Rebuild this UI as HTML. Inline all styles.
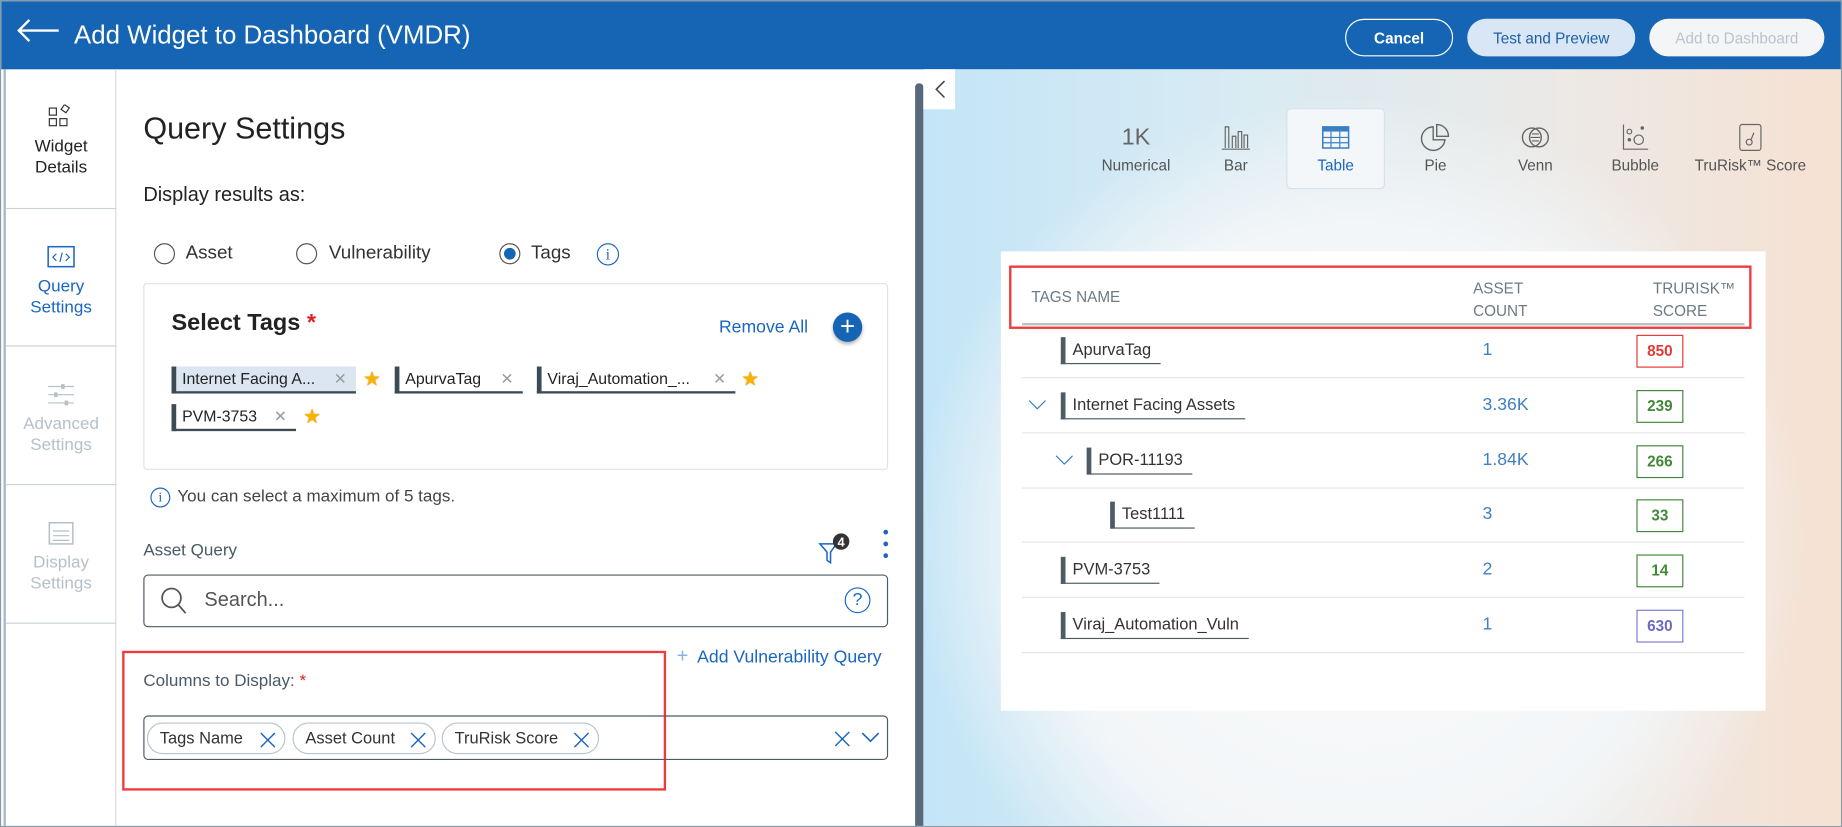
<!DOCTYPE html>
<html><head><meta charset="utf-8">
<style>
*{box-sizing:border-box;margin:0;padding:0}
html,body{width:1842px;height:827px;overflow:hidden;background:#fff}
#w{position:absolute;left:0;top:0;width:1568px;height:704px;transform:scale(1.17474);transform-origin:0 0;font-family:"Liberation Sans",sans-serif;color:#222;overflow:hidden;border:1px solid #8a9aa6}
.a{position:absolute}
.hd{left:0;top:0;width:1568px;height:58px;background:#1565b4}
.btn{position:absolute;top:15px;height:32px;border-radius:16px;font-size:13px;display:flex;align-items:center;justify-content:center}
.nav{left:2px;top:58px;width:96px;height:646px;border-right:1px solid #d5dde3;border-left:2px solid #a8b8c2}
.ni{position:absolute;left:0;width:94px;border-bottom:1px solid #c8d3da;text-align:center;font-size:14.5px;line-height:18px}
.chip{position:absolute;height:23px;border-left:4px solid #3d4b55;border-bottom:2px solid #3d4b55;font-size:13.5px;line-height:21px;padding-left:5px;color:#222;background:#fff}
.chip i{font-style:normal;color:#999;position:absolute;right:8px;top:0;font-size:13px;font-weight:100}
.star{position:absolute;color:#f6b400;font-size:17px;line-height:17px;text-shadow:0 0 1px #e07000}
.tab{position:absolute;top:94px;width:84px;text-align:center;font-size:13px;color:#555}
.tab .ic{height:38px;display:flex;align-items:center;justify-content:center;padding-top:6px}
.row{position:absolute;left:869px;width:615px;height:47px;border-bottom:1px solid #e3e6e8}
.tg{position:absolute;top:12px;height:23px;border-left:4px solid #4d5b65;border-bottom:1px solid #4d5b65;padding:0 8px 0 6px;font-size:14px;line-height:21px;color:#333}
.cnt{position:absolute;left:392px;top:14px;font-size:15px;color:#3f7fc4}
.sc{position:absolute;left:523px;top:10px;width:40px;height:28px;border:1px solid;font-size:13px;font-weight:bold;text-align:center;line-height:26px}
.pill{position:absolute;top:5px;height:27px;border:1px solid #b8c4cc;border-radius:14px;font-size:14px;line-height:25px;padding-left:10px;color:#333}
.pill b{position:absolute;right:6px;top:5px}
</style></head><body><div id="w">
<div class="a hd"></div>
<svg class="a" style="left:13px;top:14px" width="38" height="22" viewBox="0 0 38 22"><path d="M2 11H36M11 2L2 11L11 20" stroke="#fff" stroke-width="2" fill="none"/></svg>
<div class="a" style="left:62px;top:16px;font-size:22px;color:#fff;font-family:'Liberation Sans Narrow','Liberation Sans',sans-serif">Add Widget to Dashboard (VMDR)</div>
<div class="btn" style="left:1144px;width:92px;border:1px solid #fff;color:#fff;font-weight:bold">Cancel</div>
<div class="btn" style="left:1248px;width:143px;background:#d8e6f5;color:#1e5fa8">Test and Preview</div>
<div class="btn" style="left:1403px;width:149px;background:#f3f5f7;color:#bcc3cb">Add to Dashboard</div>

<div class="a nav">
 <div class="ni" style="top:0;height:119px;color:#222;padding-top:30px">
  <svg width="24" height="22" viewBox="0 0 24 22"><rect x="2" y="3" width="6" height="6" fill="none" stroke="#333"/><rect x="2" y="12" width="6" height="6" fill="none" stroke="#333"/><rect x="11" y="12" width="6" height="6" fill="none" stroke="#333"/><rect x="13" y="1" width="5" height="5" fill="none" stroke="#333" transform="rotate(35 15.5 3.5)"/></svg><br>Widget<br>Details</div>
 <div class="ni" style="top:119px;height:117px;color:#1a66c0;padding-top:30px">
  <svg width="26" height="22" viewBox="0 0 26 22"><rect x="2" y="2" width="22" height="17" fill="none" stroke="#1a66c0" stroke-width="1.3"/><path d="M9 8L6 11L9 14M17 8L20 11L17 14M14 7L12 15" stroke="#1a66c0" fill="none"/></svg><br>Query<br>Settings</div>
 <div class="ni" style="top:236px;height:118px;color:#b5c0c8;padding-top:30px">
  <svg width="26" height="22" viewBox="0 0 26 22"><path d="M2 4H24M2 11H24M2 18H24" stroke="#b5c0c8"/><rect x="13" y="2" width="3" height="4" fill="#b5c0c8"/><rect x="7" y="9" width="3" height="4" fill="#b5c0c8"/><rect x="16" y="16" width="3" height="4" fill="#b5c0c8"/></svg><br>Advanced<br>Settings</div>
 <div class="ni" style="top:354px;height:118px;color:#b5c0c8;padding-top:30px">
  <svg width="26" height="22" viewBox="0 0 26 22"><rect x="3" y="2" width="20" height="18" fill="none" stroke="#b5c0c8" stroke-width="1.3"/><path d="M6 9H20M6 13H20M6 17H20" stroke="#b5c0c8"/></svg><br>Display<br>Settings</div>
</div>

<div class="a" style="left:121px;top:93px;font-size:26px;color:#222">Query Settings</div>
<div class="a" style="left:121px;top:155px;font-size:17px;color:#222">Display results as:</div>
<div class="a" style="left:130px;top:206px;width:18px;height:18px;border:1px solid #555;border-radius:50%"></div>
<div class="a" style="left:157px;top:206px;font-size:16px;color:#333">Asset</div>
<div class="a" style="left:251px;top:206px;width:18px;height:18px;border:1px solid #555;border-radius:50%"></div>
<div class="a" style="left:279px;top:206px;font-size:16px;color:#333">Vulnerability</div>
<div class="a" style="left:424px;top:206px;width:18px;height:18px;border:1px solid #555;border-radius:50%"><div style="margin:3px;width:10px;height:10px;border-radius:50%;background:#1565b4"></div></div>
<div class="a" style="left:451px;top:206px;font-size:16px;color:#333">Tags</div>
<div class="a" style="left:507px;top:206px;width:19px;height:19px;border:1.3px solid #1a66c0;border-radius:50%;color:#1a66c0;font-size:13px;text-align:center;line-height:17px;font-family:'Liberation Serif',serif">i</div>

<div class="a" style="left:121px;top:240px;width:634px;height:159px;border:1px solid #dde3e8;border-radius:3px"></div>
<div class="a" style="left:145px;top:263px;font-size:20px;font-weight:bold;color:#222">Select Tags <span style="color:#e02020">*</span></div>
<div class="a" style="left:611px;top:269px;font-size:15px;color:#1a66c0">Remove All</div>
<div class="a" style="left:708px;top:265px;width:25px;height:25px;border-radius:50%;background:#1565b4;color:#fff;font-size:22px;line-height:24px;text-align:center;box-shadow:0 2px 3px rgba(0,0,0,.3)">+</div>
<div class="chip" style="left:145px;top:311px;width:157px;background:#dbe6f2;border-bottom-color:#3d4b55">Internet Facing A...<i>✕</i></div>
<div class="star" style="left:308px;top:313px">★</div>
<div class="chip" style="left:335px;top:311px;width:109px">ApurvaTag<i>✕</i></div>
<div class="chip" style="left:456px;top:311px;width:169px">Viraj_Automation_...<i>✕</i></div>
<div class="star" style="left:630px;top:313px">★</div>
<div class="chip" style="left:145px;top:343px;width:106px">PVM-3753<i>✕</i></div>
<div class="star" style="left:257px;top:345px">★</div>

<div class="a" style="left:127px;top:414px;width:17px;height:17px;border:1.3px solid #1a66c0;border-radius:50%;color:#1a66c0;font-size:12px;text-align:center;line-height:15px;font-family:'Liberation Serif',serif">i</div>
<div class="a" style="left:150px;top:414px;font-size:14.5px;color:#444">You can select a maximum of 5 tags.</div>
<div class="a" style="left:121px;top:460px;font-size:14.5px;color:#4a5a66">Asset Query</div>
<svg class="a" style="left:695px;top:452px" width="30" height="30" viewBox="0 0 30 30"><path d="M2 10H16L11 17V26L8 24V17Z" fill="none" stroke="#1a66c0" stroke-width="1.3"/><circle cx="20" cy="8" r="7" fill="#333"/><text x="20" y="12" font-size="11" font-weight="bold" fill="#fff" text-anchor="middle" font-family="Liberation Sans">4</text></svg>
<div class="a" style="left:751px;top:450px;width:4px;height:25px"><div style="width:4px;height:4px;border-radius:2px;background:#1a66c0;margin-bottom:6px"></div><div style="width:4px;height:4px;border-radius:2px;background:#1a66c0;margin-bottom:6px"></div><div style="width:4px;height:4px;border-radius:2px;background:#1a66c0"></div></div>
<div class="a" style="left:121px;top:488px;width:634px;height:45px;border:1px solid #4d5b65;border-radius:4px"></div>
<svg class="a" style="left:135px;top:498px" width="24" height="26" viewBox="0 0 24 26"><circle cx="10" cy="10" r="8" fill="none" stroke="#555" stroke-width="1.5"/><path d="M16 16L22 23" stroke="#555" stroke-width="1.5"/></svg>
<div class="a" style="left:173px;top:500px;font-size:17px;color:#555">Search...</div>
<div class="a" style="left:718px;top:499px;width:22px;height:22px;border:1.3px solid #1a66c0;border-radius:50%;color:#1a66c0;font-size:15px;text-align:center;line-height:20px">?</div>
<div class="a" style="left:575px;top:548px;font-size:15px;color:#1a66c0"><span style="color:#8ab0dc;font-size:17px">+</span>&nbsp; Add Vulnerability Query</div>
<div class="a" style="left:103px;top:553px;width:463px;height:119px;border:2px solid #ee3b3b"></div>
<div class="a" style="left:121px;top:571px;font-size:14.5px;color:#4a5a66">Columns to Display: <span style="color:#e02020">*</span></div>
<div class="a" style="left:121px;top:608px;width:634px;height:38px;border:1px solid #4d5b65;border-radius:4px">
 <div class="pill" style="left:2px;width:118px">Tags Name<b><svg width="16" height="16"><path d="M2 2L14 14M14 2L2 14" stroke="#1a66c0" stroke-width="1.2"/></svg></b></div>
 <div class="pill" style="left:126px;width:122px">Asset Count<b><svg width="16" height="16"><path d="M2 2L14 14M14 2L2 14" stroke="#1a66c0" stroke-width="1.2"/></svg></b></div>
 <div class="pill" style="left:253px;width:134px">TruRisk Score<b><svg width="16" height="16"><path d="M2 2L14 14M14 2L2 14" stroke="#1a66c0" stroke-width="1.2"/></svg></b></div>
 <svg class="a" style="left:586px;top:11px" width="16" height="16"><path d="M2 2L14 14M14 2L2 14" stroke="#1a66c0" stroke-width="1.2"/></svg>
 <svg class="a" style="left:610px;top:12px" width="16" height="12" viewBox="0 0 16 12"><path d="M1 2L8 9L15 2" stroke="#1a66c0" stroke-width="1.4" fill="none"/></svg>
</div>

<div class="a" style="left:785px;top:58px;width:783px;height:646px;background:radial-gradient(ellipse 380px 380px at 1155px 460px,#fafbfc 0%,#f3f6f8 70%,rgba(240,240,240,0) 100%),linear-gradient(90deg,#c3e5f7 0%,#d9ebf3 35%,#ece9e6 70%,#f6e1d2 100%);background-position:-785px -58px,0 0;background-size:1568px 704px,100% 100%"></div>
<div class="a" style="left:778px;top:70px;width:7px;height:634px;background:#56697a;border-radius:3px 3px 0 0"></div>
<div class="a" style="left:785px;top:58px;width:27px;height:34px;background:#fff"></div>
<svg class="a" style="left:794px;top:66px" width="12" height="18" viewBox="0 0 12 18"><path d="M9 2L2 9L9 16" stroke="#444" stroke-width="1.3" fill="none"/></svg>

<div class="a" style="left:1094px;top:91px;width:84px;height:69px;background:#f4f7fa;border:1px solid #d5e2ee;border-radius:4px"></div>
<div class="tab" style="left:924px"><div class="ic" style="font-size:20px;color:#666">1K</div>Numerical</div>
<div class="tab" style="left:1009px"><div class="ic"><svg width="28" height="24" viewBox="0 0 28 24"><path d="M2 22H26M5 21V3H8V21M11 21V11H14V21M16 21V7H19V21M21 21V10H24V21" stroke="#666" fill="none"/></svg></div>Bar</div>
<div class="tab" style="left:1094px;color:#1a66c0"><div class="ic"><svg width="26" height="22" viewBox="0 0 26 22"><rect x="2" y="2" width="22" height="18" fill="none" stroke="#3a7fc4" stroke-width="1.3"/><rect x="2" y="2" width="22" height="4" fill="#3a7fc4"/><path d="M2 11H24M2 15.5H24M9 6V20M16.5 6V20" stroke="#3a7fc4"/></svg></div>Table</div>
<div class="tab" style="left:1179px"><div class="ic"><svg width="26" height="26" viewBox="0 0 26 26"><path d="M11 4A10 10 0 1 0 21 15H11Z" fill="none" stroke="#666" stroke-width="1.2"/><path d="M14 2V12H24A10 10 0 0 0 14 2Z" fill="none" stroke="#666" stroke-width="1.2"/></svg></div>Pie</div>
<div class="tab" style="left:1264px"><div class="ic"><svg width="28" height="22" viewBox="0 0 28 22"><circle cx="11" cy="11" r="8" fill="none" stroke="#666" stroke-width="1.2"/><circle cx="17" cy="11" r="8" fill="none" stroke="#666" stroke-width="1.2"/><path d="M11 8H17M10 11H18M11 14H17" stroke="#666"/></svg></div>Venn</div>
<div class="tab" style="left:1349px"><div class="ic"><svg width="26" height="26" viewBox="0 0 26 26"><path d="M3 2V23H24" stroke="#666" fill="none"/><circle cx="8" cy="8" r="2" fill="none" stroke="#666"/><circle cx="8" cy="15" r="1.5" fill="#666"/><circle cx="16" cy="15" r="4" fill="none" stroke="#666"/><circle cx="19" cy="5" r="1.5" fill="#666"/></svg></div>Bubble</div>
<div class="tab" style="left:1439px;width:100px"><div class="ic"><svg width="24" height="26" viewBox="0 0 24 26"><rect x="3" y="2" width="18" height="22" rx="2" fill="none" stroke="#666"/><circle cx="11" cy="17" r="2.5" fill="none" stroke="#666"/><path d="M12.5 15L15 9" stroke="#666"/></svg></div>TruRisk™ Score</div>

<div class="a" style="left:851px;top:213px;width:651px;height:391px;background:#fff"></div>
<div class="a" style="left:869px;top:274px;width:615px;height:2px;background:#b8c2c9"></div>
<div class="a" style="left:858px;top:225px;width:632px;height:54px;border:2px solid #ee3b3b"></div>
<div class="a" style="left:877px;top:244px;font-size:13px;color:#6b7a86;font-family:'Liberation Sans Narrow','Liberation Sans',sans-serif">TAGS NAME</div>
<div class="a" style="left:1253px;top:235px;font-size:13px;line-height:19px;color:#6b7a86;font-family:'Liberation Sans Narrow','Liberation Sans',sans-serif">ASSET<br>COUNT</div>
<div class="a" style="left:1406px;top:235px;font-size:13px;line-height:19px;color:#6b7a86;font-family:'Liberation Sans Narrow','Liberation Sans',sans-serif">TRURISK™<br>SCORE</div>

<div class="row" style="top:274px"><div class="tg" style="left:33px">ApurvaTag</div><div class="cnt">1</div><div class="sc" style="border-color:#e53935;color:#e53935">850</div></div>
<div class="row" style="top:321px"><svg class="a" style="left:5px;top:18px" width="16" height="10"><path d="M1 1L8 8L15 1" stroke="#3a7fc4" fill="none"/></svg><div class="tg" style="left:33px">Internet Facing Assets</div><div class="cnt">3.36K</div><div class="sc" style="border-color:#43873a;color:#43873a">239</div></div>
<div class="row" style="top:368px"><svg class="a" style="left:28px;top:18px" width="16" height="10"><path d="M1 1L8 8L15 1" stroke="#3a7fc4" fill="none"/></svg><div class="tg" style="left:55px">POR-11193</div><div class="cnt">1.84K</div><div class="sc" style="border-color:#43873a;color:#43873a">266</div></div>
<div class="row" style="top:414px"><div class="tg" style="left:75px">Test1111</div><div class="cnt">3</div><div class="sc" style="border-color:#43873a;color:#43873a">33</div></div>
<div class="row" style="top:461px"><div class="tg" style="left:33px">PVM-3753</div><div class="cnt">2</div><div class="sc" style="border-color:#43873a;color:#43873a">14</div></div>
<div class="row" style="top:508px"><div class="tg" style="left:33px">Viraj_Automation_Vuln</div><div class="cnt">1</div><div class="sc" style="border-color:#7a7ad0;color:#6a6ac0">630</div></div>
</div></body></html>
